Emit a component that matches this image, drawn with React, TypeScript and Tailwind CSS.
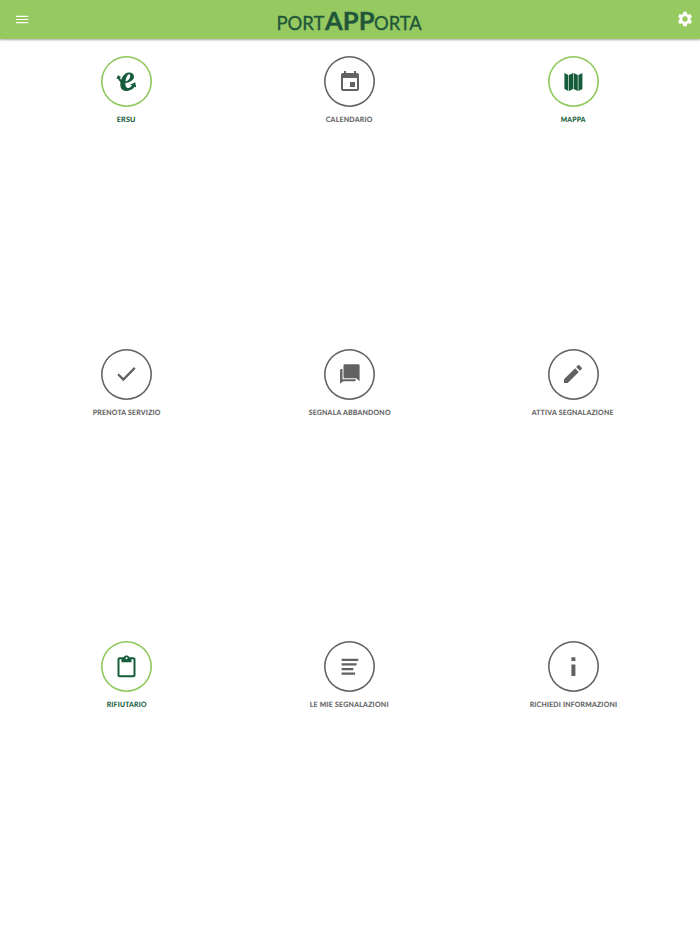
import type { ReactNode } from "react";
import { MdEvent, MdEdit, MdContentPaste, MdSettings } from "react-icons/md";

type Item = { label: string; green?: boolean; width: number; icon: ReactNode };

const items: Item[] = [
  {
    label: "ERSU",
    green: true,
    width: 19,
    icon: (
      <svg width="24" height="24" viewBox="0 0 24 24" fill="currentColor" className="-translate-x-[0.5px]">
        <path
          fillRule="evenodd"
          d="M14.2 2.4C17.4 2.2 19.6 3.9 19.5 6.5C19.4 10 16 12.3 10.9 13.1C10.7 16.2 11.4 18 13.3 18C15 18 16.6 16.8 18 14.9L19.3 15.9C17.5 19 15 21 11.7 21C8.2 21 5.8 18.6 5.8 14.8C5.8 8.6 9.6 2.7 14.2 2.4zM14.6 4.3C13 4.4 11.6 7.8 11 11.5C13.8 10.7 15.6 8.7 15.7 6.2C15.8 4.9 15.4 4.2 14.6 4.3z"
        />
        <path d="M2 8.9L3.3 5.2L6.7 7.1L5.3 8C6 9.3 6.6 10 7.8 10.6L7 13C5.2 12 4.2 10.5 3.6 8.8zM15.7 14.8L20.7 12.2L21.7 17.6L20 16.7C19 18.3 17.7 19.4 16 20.1L15.4 18.8C16.6 18 17.5 17.1 18 15.8z" />
      </svg>
    ),
  },
  { label: "CALENDARIO", width: 47, icon: <MdEvent size={24} /> },
  {
    label: "MAPPA",
    green: true,
    width: 25,
    icon: (
      <svg width="24" height="24" viewBox="0 0 24 24" fill="currentColor">
        <path d="M3.4 3L7.4 5V21L3.4 19zM8 5L12.1 3V19L8 21zM12.7 3L16.8 5V21L12.7 19zM17.4 5L21.4 3V19L17.4 21z" />
      </svg>
    ),
  },
  {
    label: "PRENOTA SERVIZIO",
    width: 68,
    icon: (
      <svg width="24" height="24" viewBox="0 0 24 24" fill="none" stroke="currentColor" strokeWidth="2.3">
        <path d="M3.1 12.3L8.3 17.5L19.8 5.9" />
      </svg>
    ),
  },
  {
    label: "SEGNALA ABBANDONO",
    width: 82,
    icon: (
      <svg width="24" height="24" viewBox="0 0 24 24" fill="currentColor">
        <path d="M6.8 2.2H20.3Q21.6 2.2 21.6 3.5V19.3L18.2 16.2H6.8Q5.5 16.2 5.5 14.9V3.5Q5.5 2.2 6.8 2.2z" />
        <path d="M3.3 7H4.5V17.3H17.8V18.1Q17.8 19.3 16.6 19.3H5.2L2.1 21.8V8.2Q2.1 7 3.3 7z" />
      </svg>
    ),
  },
  { label: "ATTIVA SEGNALAZIONE", width: 82, icon: <MdEdit size={24} /> },
  {
    label: "RIFIUTARIO",
    green: true,
    width: 40,
    icon: <MdContentPaste size={24} className="-translate-x-[0.5px] translate-y-[0.3px]" />,
  },
  {
    label: "LE MIE SEGNALAZIONI",
    width: 79,
    icon: (
      <svg width="24" height="24" viewBox="0 0 24 24" fill="currentColor">
        <path d="M3.6 3.7H20.3V6H3.6zM3.6 8.3H18.6V10.6H3.6zM3.6 12.9H15.3V15.2H3.6zM3.6 17.4H17V19.7H3.6z" />
      </svg>
    ),
  },
  {
    label: "RICHIEDI INFORMAZIONI",
    width: 87.5,
    icon: (
      <svg width="24" height="24" viewBox="0 0 24 24" fill="currentColor">
        <path d="M10.4 2.2H14.4V6.1H10.4zM10.4 9.5H14.4V21H10.4z" />
      </svg>
    ),
  },
];

function Tile({ label, green, width, icon }: Item) {
  return (
    <div className={"flex flex-col items-center " + (green ? "text-[#155c3a]" : "text-[#626262]")}>
      <div
        className={
          "flex h-[51px] w-[51px] items-center justify-center rounded-full " +
          (green ? "shadow-[inset_0_0_0_1.6px_#8cc85a]" : "shadow-[inset_0_0_0_1.6px_#626262]")
        }
      >
        {icon}
      </div>
      <svg className="mt-[5px] overflow-visible" width={width} height="13" role="img">
        <text
          x="-0.3"
          y="9.6"
          textLength={width}
          lengthAdjust="spacingAndGlyphs"
          fill="currentColor"
          stroke="currentColor"
          strokeWidth="0.12"
          className="font-['Lato',sans-serif] text-[7.3px] font-bold tracking-[0.25px] [text-rendering:geometricPrecision]"
        >
          {label}
        </text>
      </svg>
    </div>
  );
}

function Logo() {
  return (
    <svg width="146" height="38" viewBox="0 0 146 38" fill="#20563a" stroke="#20563a" strokeWidth="0.3" className="font-['Lato',sans-serif]">
      <text x="-0.6" y="30.4" fontSize="18.8" textLength="48" lengthAdjust="spacingAndGlyphs">PORT</text>
      <text x="48" y="30.4" fontSize="25.5" fontWeight="700" textLength="49.5" lengthAdjust="spacingAndGlyphs">APP</text>
      <text x="97" y="30.4" fontSize="18.8" textLength="47.8" lengthAdjust="spacingAndGlyphs">ORTA</text>
    </svg>
  );
}

export default function App() {
  return (
    <div className="flex h-[934px] w-[700px] flex-col overflow-hidden bg-white font-['Lato',sans-serif]">
      <header className="grid h-[39px] shrink-0 grid-cols-[1fr_146px_1fr] items-start bg-[#96c960] px-[6px] shadow-[0_1px_2px_rgba(0,0,0,0.35)]">
        <button className="mt-[15px] ml-[10px] justify-self-start text-white" aria-label="Menu">
          <svg width="13" height="9" viewBox="0 0 13 9" fill="currentColor">
            <path d="M0 .8H12.3V2H0zM0 3.9H12.3V5.1H0zM0 7H12.3V8.2H0z" />
          </svg>
        </button>
        <Logo />
        <button className="mt-[10px] justify-self-end text-white" aria-label="Impostazioni">
          <MdSettings size={18} />
        </button>
      </header>
      <main className="grid auto-rows-[292.5px] grid-cols-[223px_223.5px_223.5px] px-[15px] pt-[17px]">
        {items.map((item) => (
          <Tile key={item.label} {...item} />
        ))}
      </main>
    </div>
  );
}
